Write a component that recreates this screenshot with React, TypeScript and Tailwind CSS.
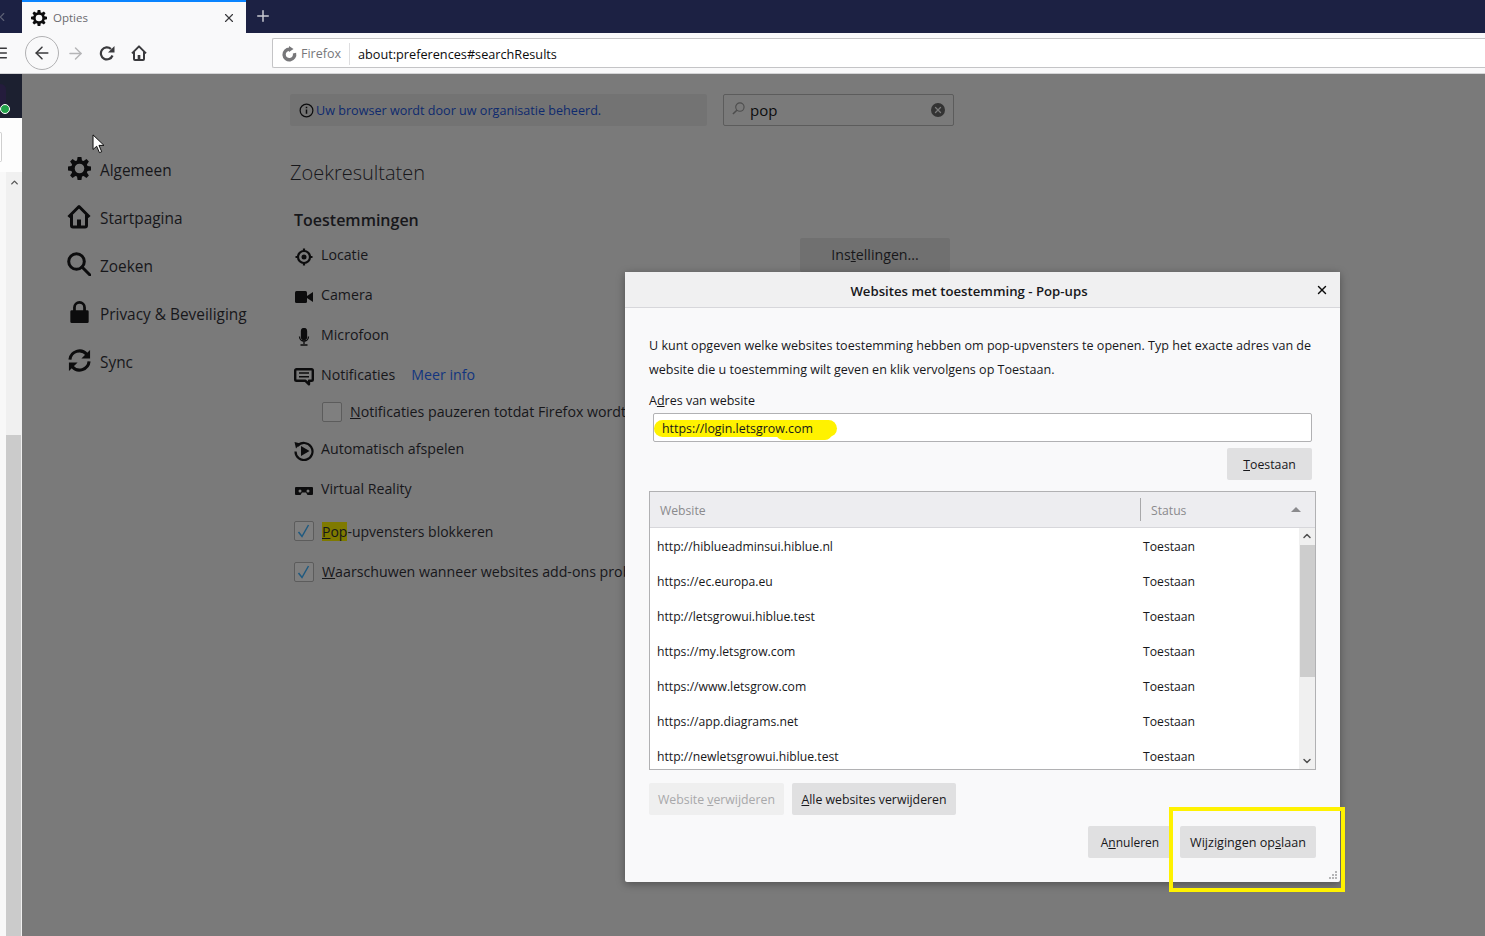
import { ArrowLeft, ArrowRight, ChevronDown, ChevronLeft, ChevronUp, Menu, Plus, X } from 'lucide-react';
import type { ReactNode } from 'react';

const sites = [
  'http://hiblueadminsui.hiblue.nl',
  'https://ec.europa.eu',
  'http://letsgrowui.hiblue.test',
  'https://my.letsgrow.com',
  'https://www.letsgrow.com',
  'https://app.diagrams.net',
  'http://newletsgrowui.hiblue.test',
];

function Gear({ className }: { className: string }) {
  return (
    <svg viewBox="0 0 24 24" className={className} fill="currentColor">
      <path
        fillRule="evenodd"
        d="M10 0h4l.6 3.6 1.700.7L19.300 2.200 21.800 4.700l-2.100 3 .7 1.700 3.600.6v4l-3.600.6-.7 1.700 2.100 3-2.500 2.500-3-2.100-1.700.7L14 24h-4l-.6-3.600-1.700-.7-3 2.100-2.500-2.500 2.100-3-.7-1.700L0 14v-4l3.600-.6.7-1.700-2.100-3L4.700 2.200l3 2.100 1.700-.7zM12 7a5 5 0 1 0 0 10 5 5 0 0 0 0-10z"
      />
    </svg>
  );
}

function HomeIcon({ className }: { className: string }) {
  return (
    <svg viewBox="0 0 24 24" className={className} fill="none" stroke="currentColor" strokeWidth="3">
      <path d="M1.500 12.500 12 2l10.500 10.500" strokeLinejoin="round" />
      <path d="M4.500 10v11a1.500 1.500 0 0 0 1.500 1.500h12a1.500 1.500 0 0 0 1.500-1.500V10" />
      <rect x="10" y="15" width="4" height="7" fill="currentColor" stroke="none" />
    </svg>
  );
}

function SearchIcon({ className }: { className: string }) {
  return (
    <svg viewBox="0 0 24 24" className={className} fill="none" stroke="currentColor" strokeWidth="3">
      <circle cx="9.500" cy="9.500" r="7.800" />
      <path d="m15 15 8 8" strokeLinecap="round" />
    </svg>
  );
}

function LockIcon({ className }: { className: string }) {
  return (
    <svg viewBox="0 0 20 24" className={className} fill="currentColor">
      <path d="M3 10V7a7 7 0 0 1 14 0v3h1.500a1.500 1.500 0 0 1 1.500 1.500v11a1.500 1.500 0 0 1-1.500 1.500h-17A1.500 1.500 0 0 1 0 22.500v-11A1.500 1.500 0 0 1 1.500 10zm3 0h8V7a4 4 0 0 0-8 0z" />
    </svg>
  );
}

function SyncIcon({ className }: { className: string }) {
  return (
    <svg viewBox="0 0 24 24" className={className} fill="none" stroke="currentColor" strokeWidth="3.200">
      <path d="M2 11a10 10 0 0 1 17.500-5.500" />
      <path d="M22 13a10 10 0 0 1-17.500 5.500" />
      <path d="M23 1v9h-9z" fill="currentColor" stroke="none" />
      <path d="M1 23v-9h9z" fill="currentColor" stroke="none" />
    </svg>
  );
}

function ReloadIcon({ className }: { className: string }) {
  return (
    <svg viewBox="0 0 16 16" className={className} fill="none" stroke="currentColor" strokeWidth="2.200">
      <path d="M13.500 10.500A6 6 0 1 1 12 4" />
      <path d="M15.500 1v6.500H9z" fill="currentColor" stroke="none" />
    </svg>
  );
}

function FirefoxIcon({ className }: { className: string }) {
  return (
    <svg viewBox="0 0 16 16" className={className} fill="none" stroke="currentColor" strokeWidth="3.400">
      <path d="M8.500 3.200a5.300 5.300 0 1 0 5 4" />
      <path d="M8 0l4.500 3L8 6z" fill="currentColor" stroke="none" />
    </svg>
  );
}

function LocationIcon() {
  return (
    <svg viewBox="0 0 18 18" className="h-[18px] w-[18px] text-[#0c0c0d]" fill="none" stroke="currentColor">
      <circle cx="9" cy="9" r="6" strokeWidth="2.200" />
      <circle cx="9" cy="9" r="2.500" fill="currentColor" stroke="none" />
      <path d="M9 .5v3M9 14.500v3M.5 9h3M14.500 9h3" strokeWidth="2.200" />
    </svg>
  );
}

function CameraIcon() {
  return (
    <svg viewBox="0 0 18 18" className="h-[18px] w-[18px] text-[#0c0c0d]" fill="currentColor">
      <rect x="0" y="3" width="12" height="12" rx="1.500" />
      <path d="M12 8l6-4v10l-6-4z" />
    </svg>
  );
}

function MicIcon() {
  return (
    <svg viewBox="0 0 18 18" className="h-[18px] w-[18px] text-[#0c0c0d]" fill="none" stroke="currentColor" strokeWidth="1.300">
      <rect x="6.500" y="0.500" width="5" height="11" rx="2.500" fill="currentColor" />
      <path d="M4.500 8.500a4.500 4.500 0 0 0 9 0M9 13v3M5.500 17h7" />
    </svg>
  );
}

function BubbleIcon() {
  return (
    <svg viewBox="0 0 20 18" className="h-[18px] w-[20px] text-[#0c0c0d]" fill="none" stroke="currentColor" strokeWidth="2.400">
      <path d="M2.500 1.200h15a1.300 1.300 0 0 1 1.300 1.300v9a1.300 1.300 0 0 1-1.300 1.300H15v3.500L11.500 12.800h-9a1.300 1.300 0 0 1-1.300-1.300v-9a1.300 1.300 0 0 1 1.300-1.300z" strokeLinejoin="round" />
      <path d="M5 5h10M5 8.800h10" strokeWidth="1.600" />
    </svg>
  );
}

function AutoplayIcon() {
  return (
    <svg viewBox="0 0 20 20" className="h-[20px] w-[20px] text-[#0c0c0d]" fill="none" stroke="currentColor" strokeWidth="2.200">
      <path d="M3.500 5a8.500 8.500 0 1 1-2 5.500" />
      <path d="M.5 1l6 1.500-4.500 5z" fill="currentColor" stroke="none" />
      <path d="M7 5v10l8.500-5z" fill="currentColor" stroke="none" />
    </svg>
  );
}

function VrIcon() {
  return (
    <svg viewBox="0 0 18 18" className="h-[18px] w-[18px] text-[#0c0c0d]" fill="currentColor">
      <path
        fillRule="evenodd"
        d="M1 5h16a1 1 0 0 1 1 1v6a1 1 0 0 1-1 1h-4.500L11 10.500H7L5.500 13H1a1 1 0 0 1-1-1V6a1 1 0 0 1 1-1zm4 2.500a1.500 1.500 0 1 0 0 3 1.500 1.500 0 0 0 0-3zm8 0a1.500 1.500 0 1 0 0 3 1.500 1.500 0 0 0 0-3z"
      />
    </svg>
  );
}

function Checkbox({ checked }: { checked?: boolean }) {
  return (
    <span className="flex h-[20px] w-[20px] shrink-0 items-center justify-center rounded-[2px] border border-[#5c5c5c] bg-[#7f7f7f]">
      {checked && (
        <svg viewBox="0 0 16 16" className="h-[16px] w-[16px] text-[#1f5a80]" fill="none" stroke="currentColor" strokeWidth="1.500">
          <path d="m2.500 9 3.500 4.500L12.500 2" />
        </svg>
      )}
    </span>
  );
}

function NavItem({ icon, label }: { icon: ReactNode; label: string }) {
  return (
    <div className="flex h-[48px] items-center">
      <span className="-mt-[2px] flex w-[24px] justify-center text-[#0c0c0d]">{icon}</span>
      <span className="ml-[9px] mt-[4px] text-[15.400px] text-[#17171a]">{label}</span>
    </div>
  );
}

function PermRow({ icon, children }: { icon: ReactNode; children: ReactNode }) {
  return (
    <div className="flex h-[40px] items-center">
      <span className="mt-[4px] flex w-[20px] justify-center">{icon}</span>
      <span className="ml-[7px] text-[14.200px] text-[#17171a]">{children}</span>
    </div>
  );
}

function DialogButton({ children, muted, className }: { children: ReactNode; muted?: boolean; className: string }) {
  return (
    <button className={`flex h-[32px] items-center justify-center whitespace-nowrap rounded-[2px] pt-[2px] text-[12.300px] ${muted ? 'bg-[#efefef] text-[#a8a8aa]' : 'bg-[#e0e0e1] text-[#17171a]'} ${className}`}>
      {children}
    </button>
  );
}

export default function App() {
  return (
    <div className="relative h-[936px] w-[1485px] overflow-hidden bg-[#7a7a7a] font-['Open_Sans','Noto_Sans',sans-serif]">
      <div className="flex h-[33px] bg-[#1c2143]">
        <div className="flex w-[22px] items-center text-[#5d6175]">
          <ChevronLeft className="-ml-[5px] h-[14px] w-[14px]" />
        </div>
        <div className="flex w-[224px] items-center border-t-2 border-[#0a84ff] bg-[#f9f9fa] pl-[9px] pr-[10px]">
          <Gear className="h-[16px] w-[16px] text-[#0c0c0d]" />
          <span className="ml-[6px] text-[11.500px] text-[#6a6a6e]">Opties</span>
          <X className="ml-auto h-[14px] w-[14px] text-[#3a3a3d]" strokeWidth={2} />
        </div>
        <div className="ml-[8px] flex -translate-y-[1px] items-center text-[#c9cad2]">
          <Plus className="h-[18px] w-[18px]" strokeWidth={2} />
        </div>
      </div>

      <div className="flex h-[41px] items-center border-b border-[#d4d4d6] bg-[#f9f9fa]">
        <Menu className="-ml-[7px] h-[16px] w-[16px] text-[#3a3a3d]" strokeWidth={2.200} />
        <span className="ml-[16px] flex h-[34px] w-[34px] items-center justify-center rounded-full border border-[#b1b1b3] text-[#3a3a3d]">
          <ArrowLeft className="h-[20px] w-[20px]" strokeWidth={1.800} />
        </span>
        <ArrowRight className="ml-[7px] h-[19px] w-[19px] text-[#b5b5b7]" strokeWidth={1.800} />
        <ReloadIcon className="ml-[14px] h-[16px] w-[16px] text-[#3a3a3d]" />
        <HomeIcon className="ml-[16px] h-[16px] w-[16px] text-[#3a3a3d]" />
        <div className="ml-[125px] flex h-[30px] flex-1 items-center rounded-l-[2px] border border-r-0 border-[#c4c4c6] bg-white pt-[3px]">
          <FirefoxIcon className="ml-[8px] h-[16px] w-[16px] -translate-y-[1px] text-[#77777a]" />
          <span className="ml-[4px] text-[12.500px] text-[#77777a]">Firefox</span>
          <span className="ml-[8px] h-[22px] w-px -translate-y-[1px] bg-[#dedee0]" />
          <span className="ml-[8px] text-[12.700px] text-[#0c0c0d]">about:preferences#searchResults</span>
        </div>
      </div>

      <div className="flex h-[862px]">
        <aside className="flex w-[22px] shrink-0 flex-col">
          <div className="relative h-[44px] overflow-hidden bg-[#1c2030]">
            <span className="absolute -left-[5px] top-[10px] h-[22px] w-[11px] rounded-full bg-[#241c3c]" />
            <span className="absolute left-0 top-[30px] h-[10px] w-[10px] rounded-full border border-white bg-[#22a34a]" />
          </div>
          <div className="h-[54px] bg-[#fdfdfd] pt-[14px]">
            <div className="h-[30px] w-[2px] rounded-r-[2px] border border-l-0 border-[#cfcfcf] bg-white" />
          </div>
          <div className="flex flex-1">
            <div className="w-[6px] bg-[#f8f8f8]" />
            <div className="flex w-[16px] flex-col bg-[#f0f0f0]">
              <ChevronUp className="mx-auto mt-[5px] h-[11px] w-[11px] text-[#555]" strokeWidth={3} />
              <div className="ml-0 mr-[1px] mt-[247px] flex-1 bg-[#cbcbcb]" />
            </div>
          </div>
        </aside>

        <nav className="ml-[45px] w-[223px] shrink-0 pt-[71px]">
          <NavItem icon={<Gear className="h-[23px] w-[23px]" />} label="Algemeen" />
          <NavItem icon={<HomeIcon className="h-[25px] w-[25px]" />} label="Startpagina" />
          <NavItem icon={<SearchIcon className="h-[24px] w-[24px]" />} label="Zoeken" />
          <NavItem icon={<LockIcon className="h-[22px] w-[19px]" />} label="Privacy &amp; Beveiliging" />
          <NavItem icon={<SyncIcon className="h-[23px] w-[23px]" />} label="Sync" />
        </nav>

        <main className="w-[664px] shrink-0 pt-[20px]">
          <div className="flex">
            <div className="flex h-[32px] w-[417px] items-center rounded-[2px] bg-[#737373] pl-[9px] text-[12.600px] text-[#0e2a6e]">
              <svg viewBox="0 0 16 16" className="h-[15px] w-[15px] text-[#0c0c0d]" fill="none" stroke="currentColor" strokeWidth="1.300">
                <circle cx="8" cy="8" r="6.800" />
                <path d="M8 7v4.500M8 4v1.500" strokeWidth="1.600" />
              </svg>
              <span className="ml-[2px] pt-[2px]">Uw browser wordt door uw organisatie beheerd.</span>
            </div>
            <div className="ml-[16px] flex h-[32px] w-[231px] items-center rounded-[2px] border border-[#5c5c5c] bg-[#7a7a7a] pl-[8px] pr-[8px]">
              <svg viewBox="0 0 14 14" className="-mt-[3px] h-[13px] w-[13px] text-[#4d4d4d]" fill="none" stroke="currentColor" strokeWidth="1.200">
                <circle cx="8.500" cy="5.500" r="4.500" />
                <path d="M5.200 8.800 1 13" strokeWidth="1.600" />
              </svg>
              <span className="ml-[5px] text-[15px] text-[#0c0c0d]">pop</span>
              <span className="ml-auto flex h-[14px] w-[14px] items-center justify-center rounded-full bg-[#333]">
                <X className="h-[10px] w-[10px] text-[#7a7a7a]" strokeWidth={3} />
              </span>
            </div>
          </div>

          <h1 className="mt-[31px] text-[20px] font-light leading-[32px] text-[#17171a]">Zoekresultaten</h1>
          <h2 className="ml-[4px] mt-[19px] text-[16px] font-semibold leading-[24px] text-[#17171a]">Toestemmingen</h2>

          <div className="ml-[4px] mt-[3px]">
            <div className="relative">
              <PermRow icon={<LocationIcon />}>Locatie</PermRow>
              <span className="absolute left-[506px] top-[3px] flex h-[34px] w-[150px] items-center justify-center rounded-[2px] bg-[#707070] text-[14.200px] text-[#17171a]">
                <span>Ins<u>t</u>ellingen...</span>
              </span>
            </div>
            <PermRow icon={<CameraIcon />}>Camera</PermRow>
            <PermRow icon={<MicIcon />}>Microfoon</PermRow>
            <PermRow icon={<BubbleIcon />}>
              Notificaties<span className="ml-[16px] text-[#12357f]">Meer info</span>
            </PermRow>
            <div className="ml-[28px] flex h-[34px] items-center whitespace-nowrap text-[14.200px] text-[#17171a]">
              <Checkbox />
              <span className="ml-[8px]"><u>N</u>otificaties pauzeren totdat Firefox wordt</span>
            </div>
            <PermRow icon={<AutoplayIcon />}>Automatisch afspelen</PermRow>
            <PermRow icon={<VrIcon />}>Virtual Reality</PermRow>
            <div className="mt-[2px] flex h-[40px] items-center whitespace-nowrap text-[14px] text-[#17171a]">
              <Checkbox checked />
              <span className="ml-[8px]"><span className="bg-[#7f7a00]"><u>P</u>op</span>-upvensters blokkeren</span>
            </div>
            <div className="mt-[1px] flex h-[40px] items-center whitespace-nowrap text-[14.200px] text-[#17171a]">
              <Checkbox checked />
              <span className="ml-[8px]"><u>W</u>aarschuwen wanneer websites add-ons prob</span>
            </div>
          </div>
        </main>
      </div>

      <div className="absolute left-[625px] top-[272px] flex h-[610px] w-[715px] flex-col rounded-[2px] bg-[#f9f9fa] shadow-[0_2px_8px_rgba(0,0,0,0.35)]">
        <div className="relative flex h-[36px] items-center justify-center border-b border-[#d7d7db] bg-[#f0f0f1] pr-[27px] pt-[4px]">
          <span className="text-[13.200px] font-semibold text-[#17171a]">Websites met toestemming - Pop-ups</span>
          <X className="absolute right-[11px] top-[11px] h-[14px] w-[14px] text-[#0c0c0d]" strokeWidth={2.500} />
        </div>
        <div className="flex flex-1 flex-col px-[24px] pb-[24px] text-[12.500px] text-[#17171a]">
          <p className="mt-[26px] text-[12.560px] leading-[24px]">
            U kunt opgeven welke websites toestemming hebben om pop-upvensters te openen. Typ het exacte adres van de website die u toestemming wilt geven en klik vervolgens op Toestaan.
          </p>
          <label className="mt-[11px] leading-[16px]">A<u>d</u>res van website</label>
          <div className="relative mx-[4px] mt-[4px] flex h-[29px] items-center rounded-[2px] border border-[#b1b1b3] bg-white pl-[8px] pt-[4px] text-[12.400px]">
            <span className="absolute left-0 top-[6px] h-[17px] w-[183px] rounded-full bg-[#fff200]" />
            <span className="absolute left-[122px] top-[12px] h-[14px] w-[56px] rounded-full bg-[#fff200]" />
            <span className="relative">https://login.letsgrow.com</span>
          </div>
          <div className="mr-[4px] mt-[6px] flex justify-end">
            <DialogButton className="w-[85px]"><span><u>T</u>oestaan</span></DialogButton>
          </div>

          <div className="mt-[11px] flex h-[279px] flex-col border border-[#b1b1b3] bg-white text-[12.200px]">
            <div className="flex h-[36px] shrink-0 items-center border-b border-[#d7d7db] bg-[#ededf0] text-[#8a8a8d]">
              <span className="w-[490px] pl-[10px] pt-[4px]">Website</span>
              <span className="h-[23px] w-px bg-[#a8a8aa]" />
              <span className="ml-[10px] pt-[4px]">Status</span>
              <span className="ml-auto mr-[14px] h-0 w-0 border-x-[5px] border-b-[5px] border-x-transparent border-b-[#8a8a8d]" />
            </div>
            <div className="flex min-h-0 flex-1">
              <div className="flex-1 overflow-hidden">
                {sites.map((site) => (
                  <div key={site} className="flex h-[35px] items-center whitespace-nowrap pl-[7px] pt-[4px]">
                    <span className="w-[486px]">{site}</span>
                    <span>Toestaan</span>
                  </div>
                ))}
              </div>
              <div className="flex w-[16px] shrink-0 flex-col bg-[#f0f0f0]">
                <ChevronUp className="mx-auto mt-[2px] h-[12px] w-[12px] text-[#505050]" strokeWidth={3} />
                <div className="mx-auto mt-[3px] h-[132px] w-[15px] bg-[#cdcdcd]" />
                <ChevronDown className="mx-auto mb-[2px] mt-auto h-[12px] w-[12px] text-[#505050]" strokeWidth={3} />
              </div>
            </div>
          </div>

          <div className="mt-[13px] flex gap-[8px]">
            <DialogButton muted className="w-[135px]"><span>Website <u>v</u>erwijderen</span></DialogButton>
            <DialogButton className="w-[164px]"><span><u>A</u>lle websites verwijderen</span></DialogButton>
          </div>
          <div className="mt-[11px] flex justify-end gap-[8px]">
            <DialogButton className="w-[84px]"><span className="text-[12px]">A<u>n</u>nuleren</span></DialogButton>
            <DialogButton className="w-[136px]"><span className="text-[12.600px]">Wijzigingen op<u>s</u>laan</span></DialogButton>
          </div>
        </div>
        <svg viewBox="0 0 9 9" className="absolute bottom-[2px] right-[2px] h-[9px] w-[9px] text-[#b5b5b7]" fill="currentColor">
          <path d="M6 0h2v2H6zM3 3h2v2H3zM6 3h2v2H6zM0 6h2v2H0zM3 6h2v2H3zM6 6h2v2H6z" />
        </svg>
      </div>

      <div className="absolute left-[1169px] top-[807px] h-[85px] w-[176px] border-[4px] border-[#fff200]" />

      <svg viewBox="0 0 14 22" className="absolute left-[92px] top-[134px] h-[20px] w-[13px]" fill="#fff" stroke="#000" strokeWidth="1">
        <path d="M1 1v16l4-3.500 3 7 2.500-1-3-7H13z" />
      </svg>
    </div>
  );
}
